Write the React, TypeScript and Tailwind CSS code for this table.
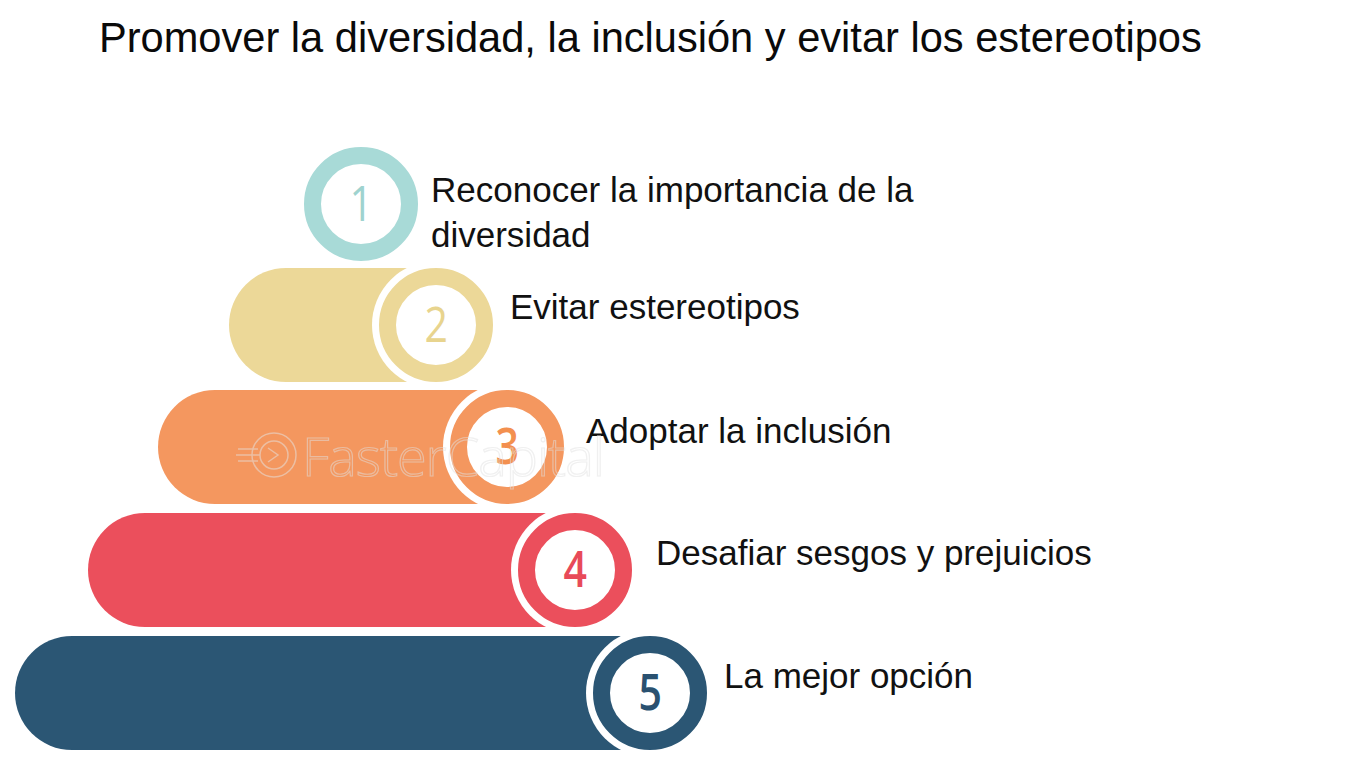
import React from "react";

type Row = {
  n: number;
  left: number;
  center: number;
  mt: number;
  ring: string;
  bar: string;
  num: string;
  weight: string;
  labelMl: number;
  labelMt: number;
  lines: string[];
};

const rows: Row[] = [
  { n: 1, left: 0, center: 360, mt: 0, ring: "border-[#a8dad7]", bar: "", num: "text-[#9fd3cf]", weight: "font-normal", labelMl: 6, labelMt: 20, lines: ["Reconocer la importancia de la", "diversidad"] },
  { n: 2, left: 229, center: 436, mt: 7, ring: "border-[#ecd898]", bar: "bg-[#ecd898]", num: "text-[#e8d48e]", weight: "font-normal", labelMl: 10, labelMt: 16, lines: ["Evitar estereotipos"] },
  { n: 3, left: 158, center: 507, mt: 8, ring: "border-[#f4975f]", bar: "bg-[#f4975f]", num: "text-[#f3904f]", weight: "font-semibold", labelMl: 15, labelMt: 18, lines: ["Adoptar la inclusión"] },
  { n: 4, left: 88, center: 575, mt: 9, ring: "border-[#eb4f5c]", bar: "bg-[#eb4f5c]", num: "text-[#e84a59]", weight: "font-semibold", labelMl: 17, labelMt: 17, lines: ["Desafiar sesgos y prejuicios"] },
  { n: 5, left: 15, center: 650, mt: 9, ring: "border-[#2b5674]", bar: "bg-[#2b5674]", num: "text-[#2a5170]", weight: "font-semibold", labelMl: 10, labelMt: 17, lines: ["La mejor opción"] },
];

function Ring({ r }: { r: Row }) {
  return (
    <div
      className={`shrink-0 w-[128px] h-[128px] rounded-full bg-white p-[7px] ${r.n === 1 ? "" : "-ml-[64px]"}`}
    >
      <div
        className={`w-[114px] h-[114px] rounded-full border-[17px] ${r.ring} bg-white flex items-center justify-center`}
      >
        <span
          className={`${r.num} ${r.weight} text-[50px] leading-none -mt-[4px] scale-x-[0.82]`}
          style={{ fontFamily: '"Open Sans", "Noto Sans", sans-serif' }}
        >
          {r.n}
        </span>
      </div>
    </div>
  );
}

export default function App() {
  return (
    <div
      className="relative w-[1350px] h-[759px] overflow-hidden bg-white text-black"
      style={{ fontFamily: '"Liberation Sans", Arial, sans-serif' }}
    >
      <h1 className="pt-[17px] pl-[99px] text-[41.6px] leading-[41px] font-normal text-[#0a0a0a] whitespace-nowrap">
        Promover la diversidad, la inclusión y evitar los estereotipos
      </h1>

      <div className="flex flex-col mt-[89px]">
        {rows.map((r) => (
          <div
            key={r.n}
            className="flex items-start h-[114px]"
            style={{
              marginLeft: r.n === 1 ? 297 : r.left,
              marginTop: r.mt,
            }}
          >
            {r.n !== 1 && (
              <div
                className={`shrink-0 h-[114px] rounded-l-full ${r.bar}`}
                style={{ width: r.center - r.left }}
              />
            )}
            <div className="shrink-0 h-[114px] flex items-center">
              <Ring r={r} />
            </div>
            <div
              className="text-[35px] leading-[45px] text-[#111] whitespace-nowrap"
              style={{ marginLeft: r.labelMl, marginTop: r.labelMt }}
            >
              {r.lines.map((l) => (
                <div key={l}>{l}</div>
              ))}
            </div>
          </div>
        ))}
      </div>

      {/* watermark */}
      <div className="absolute left-[234px] top-[424px] flex items-center gap-[2px] opacity-50 pointer-events-none">
        <svg width="66" height="62" viewBox="0 0 66 62" fill="none" stroke="#e6e6e6" strokeWidth="1.5">
          <circle cx="40" cy="31" r="22" />
          <circle cx="40" cy="31" r="14" />
          <path d="M4 25 H24 M2 31 H26 M4 37 H24" />
          <path d="M34 24 L44 31 L34 38" />
        </svg>
        <span
          className="text-[54px] leading-none text-transparent [-webkit-text-stroke:1.2px_#e2e2e2] tracking-[-1px]"
          style={{ fontFamily: '"Open Sans", sans-serif', fontWeight: 300 }}
        >
          FasterCapital
        </span>
      </div>
    </div>
  );
}
